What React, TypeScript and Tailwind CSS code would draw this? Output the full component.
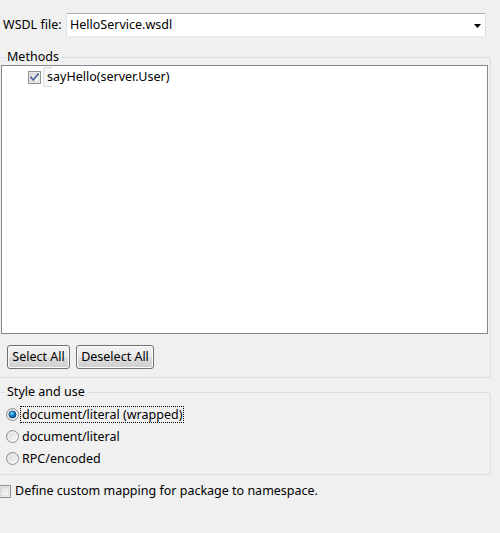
import React from "react";

function CheckBox({ checked }: { checked?: boolean }) {
  return (
    <svg width="13" height="13" viewBox="0 0 13 13" className="shrink-0 block">
      <defs>
        <linearGradient id={checked ? "cbg1" : "cbg0"} x1="0" y1="0" x2="1" y2="1">
          <stop offset="0" stopColor="#dcdcdc" />
          <stop offset="1" stopColor="#fbfbfb" />
        </linearGradient>
      </defs>
      <rect x="0.5" y="0.5" width="12" height="12" fill="#ffffff" stroke="#8e8f8f" />
      <rect x="2" y="2" width="9" height="9" fill={`url(#${checked ? "cbg1" : "cbg0"})`} stroke="#b8b8b8" strokeWidth="0.6" />
      {checked && (
        <path d="M3 6.3 L5.3 9 L10 3.2" fill="none" stroke="#4a5f97" strokeWidth="1.6" strokeLinecap="square" />
      )}
    </svg>
  );
}

function Radio({ checked }: { checked?: boolean }) {
  return (
    <svg width="13" height="13" viewBox="0 0 13 13" className="shrink-0 block">
      <defs>
        <linearGradient id="rbg" x1="0" y1="0" x2="1" y2="1">
          <stop offset="0" stopColor="#d5d5d5" />
          <stop offset="1" stopColor="#fcfcfc" />
        </linearGradient>
        <radialGradient id="rdot" cx="0.4" cy="0.35" r="0.7">
          <stop offset="0" stopColor="#8ad8ff" />
          <stop offset="0.45" stopColor="#1a8ad2" />
          <stop offset="1" stopColor="#0a3a6c" />
        </radialGradient>
      </defs>
      <circle cx="6.5" cy="6.5" r="6" fill="url(#rbg)" stroke="#8e8f8f" />
      <circle cx="6.5" cy="6.5" r="4.3" fill="none" stroke="#ffffff" strokeWidth="0.8" opacity="0.6" />
      {checked && <circle cx="6.5" cy="6.5" r="3.6" fill="url(#rdot)" stroke="#17406c" strokeWidth="0.7" />}
    </svg>
  );
}

function Btn({ label, w }: { label: string; w: string }) {
  return (
    <button
      className={`${w} h-[24px] border border-[#707070] rounded-[3px] bg-[linear-gradient(#f2f2f2_0%,#ebebeb_50%,#dddddd_51%,#cfcfcf_100%)] shadow-[inset_0_0_0_1px_#fcfcfc] text-[12.5px] leading-none text-black flex items-center justify-center`}
    >
      {label}
    </button>
  );
}

export default function App() {
  return (
    <div className="w-[500px] h-[533px] bg-[#f0f0f0] overflow-hidden text-[12.5px] text-black font-['Noto_Sans','Open_Sans',sans-serif]">
      {/* WSDL file row */}
      <div className="flex items-center pt-[13px] pl-[3px]">
        <span className="w-[63px] leading-[24px]">WSDL file:</span>
        <div className="relative w-[420px] h-[24px] bg-white border border-t-[#abadb3] border-x-[#dbdfe6] border-b-[#e3e9ef] rounded-[2px] flex items-center pl-[3px]">
          <span>HelloService.wsdl</span>
          <svg width="7" height="4" viewBox="0 0 7 4" className="absolute right-[4px] top-[10px]">
            <path d="M0 0 H7 L3.5 4 Z" fill="#000" />
          </svg>
        </div>
      </div>

      {/* Methods group */}
      <fieldset className="mt-[12px] w-[491px] border border-l-0 border-[#d5dfe5] rounded-r-[3px] pb-[8px]">
        <legend className="ml-[5px] px-[2px] leading-[16px]">Methods</legend>
        <div className="ml-[1px] w-[487px] h-[269px] bg-white border border-[#828790] pt-[4px] pl-[26px]">
          <div className="relative flex items-center h-[14px]">
            <CheckBox checked />
            <div className="absolute left-[15px] top-[-3px] w-[9px] h-[20px] border border-r-0 border-[#d9d9d9] rounded-l-[3px] bg-[#f7f7f7]" />
            <span className="relative ml-[6px] leading-[14px]">sayHello(server.User)</span>
          </div>
        </div>
        <div className="flex gap-[6px] mt-[11px] ml-[7px]">
          <Btn label="Select All" w="w-[63px]" />
          <Btn label="Deselect All" w="w-[78px]" />
        </div>
      </fieldset>

      {/* Style and use group */}
      <fieldset className="mt-[6px] w-[491px] border border-l-0 border-[#d5dfe5] rounded-r-[3px] pt-[3px] pb-[5px]">
        <legend className="ml-[5px] px-[2px] leading-[16px]">Style and use</legend>
        <div className="flex flex-col pl-[6px]">
          <div className="flex items-center h-[22px]">
            <Radio checked />
            <span className="ml-[2px] px-[1px] leading-[15px] outline outline-1 outline-dotted outline-[#000]">document/literal (wrapped)</span>
          </div>
          <div className="flex items-center h-[22px]">
            <Radio />
            <span className="ml-[3px] leading-[15px]">document/literal</span>
          </div>
          <div className="flex items-center h-[22px]">
            <Radio />
            <span className="ml-[3px] leading-[15px]">RPC/encoded</span>
          </div>
        </div>
      </fieldset>

      {/* Custom mapping */}
      <div className="flex items-center h-[20px] mt-[6px] ml-[-2px]">
        <CheckBox />
        <span className="ml-[4px]">Define custom mapping for package to namespace.</span>
      </div>
    </div>
  );
}
